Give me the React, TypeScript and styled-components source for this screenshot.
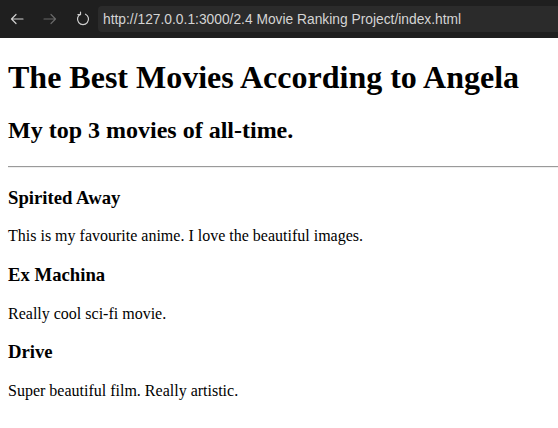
import React from "react";
import styled, { createGlobalStyle } from "styled-components";

const Global = createGlobalStyle`
  html, body { margin: 0; padding: 0; background: #fff; }
  body { font-family: "Liberation Serif", "Times New Roman", serif; color: #000; }
`;

const Toolbar = styled.div`
  height: 38px;
  background: #1f1f1f;
  display: flex;
  align-items: center;
  box-sizing: border-box;
`;

const NavButton = styled.div<{ $dim?: boolean }>`
  width: 33px;
  height: 38px;
  display: flex;
  align-items: center;
  justify-content: center;
  color: ${(p) => (p.$dim ? "#686868" : "#cfcfcf")};
`;

const UrlField = styled.div`
  flex: 1;
  height: 26px;
  margin-left: -1px;
  background: #2b2b2b;
  border-radius: 4px 0 0 4px;
  display: flex;
  align-items: center;
  padding-left: 5px;
  font-family: "Liberation Sans", Arial, sans-serif;
  font-size: 13.8px;
  color: #d4d4d4;
  white-space: nowrap;
  overflow: hidden;
`;

const Page = styled.main`
  padding: 0 8px 8px;
  overflow: hidden;
`;

const Title = styled.h1`
  font-size: 32px;
  font-weight: bold;
  margin: 21px 0;
`;

const Subtitle = styled.h2`
  font-size: 24px;
  font-weight: bold;
  margin: 20px 0 22px;
`;

const Rule = styled.hr`
  border: none;
  border-top: 1px solid #9a9a9a;
  border-bottom: 1px solid #eee;
  margin: 0 -8px 0 0;
`;

const MovieTitle = styled.h3`
  font-size: 18.72px;
  font-weight: bold;
  margin: 18.7px 0;
`;

const Description = styled.p`
  font-size: 16px;
  margin: 16px 0;
`;

const Back = () => (
  <svg width="16" height="16" viewBox="0 0 16 16" fill="none" stroke="currentColor" strokeWidth="1.2" strokeLinecap="round" strokeLinejoin="round">
    <path d="M14 8H2.5M7 3.5L2.5 8 7 12.5" />
  </svg>
);

const Forward = () => (
  <svg width="16" height="16" viewBox="0 0 16 16" fill="none" stroke="currentColor" strokeWidth="1.2" strokeLinecap="round" strokeLinejoin="round">
    <path d="M2 8h11.5M9 3.5L13.5 8 9 12.5" />
  </svg>
);

const Reload = () => (
  <svg width="16" height="16" viewBox="0 0 16 16" fill="none" stroke="currentColor" strokeWidth="1.2" strokeLinecap="round" strokeLinejoin="round">
    <path d="M10.5 3.2A5.5 5.5 0 1 1 5.5 3.2" />
    <path d="M5.5 1v2.6H2.9" />
  </svg>
);

const movies = [
  { title: "Spirited Away", text: "This is my favourite anime. I love the beautiful images." },
  { title: "Ex Machina", text: "Really cool sci-fi movie." },
  { title: "Drive", text: "Super beautiful film. Really artistic." },
];

export default function App() {
  return (
    <>
      <Global />
      <Toolbar>
        <NavButton><Back /></NavButton>
        <NavButton $dim><Forward /></NavButton>
        <NavButton><Reload /></NavButton>
        <UrlField>http://127.0.0.1:3000/2.4 Movie Ranking Project/index.html</UrlField>
      </Toolbar>
      <Page>
        <Title>The Best Movies According to Angela</Title>
        <Subtitle>My top 3 movies of all-time.</Subtitle>
        <Rule />
        {movies.map((m) => (
          <section key={m.title}>
            <MovieTitle>{m.title}</MovieTitle>
            <Description>{m.text}</Description>
          </section>
        ))}
      </Page>
    </>
  );
}
